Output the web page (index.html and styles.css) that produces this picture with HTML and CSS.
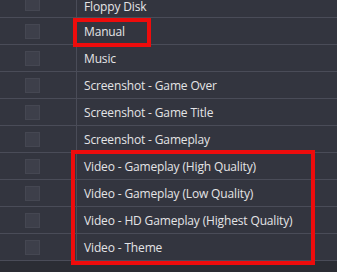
FILE: index.html
```html
<!DOCTYPE html>
<html lang="en">
<head>
    <meta charset="UTF-8">
    <meta name="viewport" content="width=device-width, initial-scale=1.0">
    <title>Additional Apps</title>
    <link rel="stylesheet" href="styles.css">
</head>
<body>
    <div class="panel">
        <div class="list">
            <div class="row partial"><div class="check-cell"><span class="check"></span></div><div class="name">Floppy Disk</div></div>
            <div class="row"><div class="check-cell"><span class="check"></span></div><div class="name">Manual</div></div>
            <div class="row"><div class="check-cell"><span class="check"></span></div><div class="name">Music</div></div>
            <div class="row"><div class="check-cell"><span class="check"></span></div><div class="name">Screenshot - Game Over</div></div>
            <div class="row"><div class="check-cell"><span class="check"></span></div><div class="name">Screenshot - Game Title</div></div>
            <div class="row"><div class="check-cell"><span class="check"></span></div><div class="name">Screenshot - Gameplay</div></div>
            <div class="row"><div class="check-cell"><span class="check"></span></div><div class="name">Video - Gameplay (High Quality)</div></div>
            <div class="row"><div class="check-cell"><span class="check"></span></div><div class="name">Video - Gameplay (Low Quality)</div></div>
            <div class="row"><div class="check-cell"><span class="check"></span></div><div class="name">Video - HD Gameplay (Highest Quality)</div></div>
            <div class="row"><div class="check-cell"><span class="check"></span></div><div class="name">Video - Theme</div></div>
        </div>
        <div class="footer"></div>

        <!-- marcações em vermelho -->
        <div class="mark mark-manual"></div>
        <div class="mark mark-video"></div>
    </div>
</body>
</html>
```

FILE: styles.css
```css
body {
    margin: 0;
    padding: 0;
    background: #33353f;
    font-family: 'Open Sans', 'Noto Sans', sans-serif;
    font-size: 12px;
    letter-spacing: -0.15px;
    color: #e4e4e6;
}

.panel {
    position: relative;
    width: 337px;
    height: 272px;
    overflow: hidden;
}

.row {
    display: flex;
    height: 26px;
    border-bottom: 1px solid #4a4c58;
}

/* primeira linha, cortada pela rolagem */
.row.partial {
    height: 17px;
}

.row.partial .check-cell {
    align-items: flex-start;
}

.row.partial .check {
    height: 10px;
    border-top: none;
}

.row.partial .name {
    align-items: flex-end;
    line-height: 14px;
    padding-bottom: 3px;
}

.check-cell {
    width: 77px;
    display: flex;
    align-items: center;
    padding-left: 25px;
    box-sizing: border-box;
    border-right: 1px solid #4a4c58;
}

.check {
    width: 13px;
    height: 13px;
    background: #3d3f4a;
    border: 1px solid #454752;
}

.name {
    display: flex;
    align-items: center;
    padding-left: 7px;
}

.footer {
    height: 11px;
    background: #2b2d34;
}

.mark {
    position: absolute;
    border: 4px solid #ee0c0c;
    box-sizing: border-box;
}

.mark-manual {
    left: 73px;
    top: 18px;
    width: 78px;
    height: 29px;
}

.mark-video {
    left: 71px;
    top: 150px;
    width: 244px;
    height: 115px;
}
```
